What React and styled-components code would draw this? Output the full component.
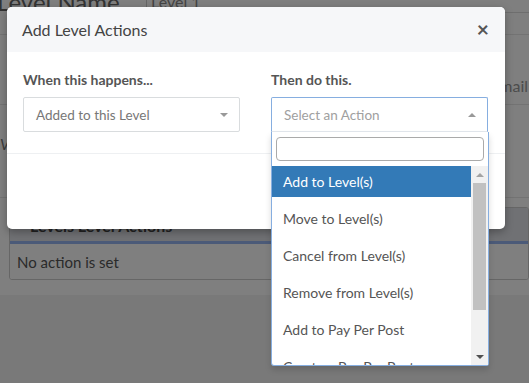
import React from 'react';
import styled, { createGlobalStyle } from 'styled-components';

const GlobalStyle = createGlobalStyle`
  html, body {
    margin: 0;
    padding: 0;
    width: 529px;
    height: 383px;
    overflow: hidden;
    background: #fff;
    font-family: Lato, "Noto Sans", sans-serif;
  }
`;

const Page = styled.div`
  position: relative;
  width: 529px;
  height: 383px;
  overflow: hidden;
  background: #fff;
  color: #666;
`;

/* page behind the modal */

const TopRow = styled.div`
  display: flex;
  align-items: flex-start;
  height: 35px;
  border-bottom: 1px solid #e6e6e6;
  box-sizing: border-box;
`;

const PageTitle = styled.h1`
  margin: -13px 0 0 -3px;
  width: 149px;
  font-size: 24px;
  line-height: 30px;
  font-weight: 400;
  color: #666;
`;

const NameInput = styled.div`
  flex: 1;
  height: 23px;
  margin-top: -10px;
  padding: 0 4px;
  box-sizing: border-box;
  border-left: 1px solid #ccc;
  border-bottom: 1px solid #ddd;
  font-size: 16px;
  line-height: 24px;
  color: #888;
`;

const TabRow = styled.div`
  display: flex;
  justify-content: flex-end;
  align-items: flex-end;
  height: 70px;
  padding-bottom: 9px;
  box-sizing: border-box;
  border-bottom: 1px solid #e6e6e6;
`;

const Tab = styled.span`
  font-size: 16px;
  color: #999;
  margin-right: 1px;
`;

const FormRow = styled.div`
  height: 93px;
  padding-top: 30px;
  box-sizing: border-box;
  border-bottom: 1px solid #e6e6e6;
  font-size: 15px;
  font-style: italic;
  color: #777;
`;

const Panel = styled.div`
  margin: 9px 0 0 9px;
  border: 1px solid #ccc;
  border-radius: 3px;
  overflow: hidden;
`;

const PanelHead = styled.div`
  height: 36px;
  padding: 0 20px;
  box-sizing: border-box;
  background: #e0e3e8;
  border-bottom: 3px solid #96b4f0;
  font-size: 16px;
  font-weight: 700;
  line-height: 36px;
  color: #444;
`;

const PanelRow = styled.div`
  height: 35px;
  padding: 0 7px;
  font-size: 15px;
  line-height: 36px;
  color: #555;
  background: #fff;
`;

const PageFoot = styled.div`
  margin-top: 15px;
  height: 100px;
  background: #f3f3f3;
`;

const Overlay = styled.div`
  position: absolute;
  inset: 0;
  background: rgba(0, 0, 0, 0.5);
`;

/* modal */

const Modal = styled.div`
  position: absolute;
  left: 7px;
  top: 7px;
  width: 498px;
  background: #fff;
  border-radius: 5px;
  box-shadow: 0 3px 9px rgba(0, 0, 0, 0.3);
`;

const ModalHeader = styled.div`
  display: flex;
  align-items: center;
  justify-content: space-between;
  height: 45px;
  padding: 0 16px 0 15px;
  background: #f6f7f9;
  border-radius: 5px 5px 0 0;
`;

const ModalTitle = styled.h4`
  margin: 0;
  font-size: 16px;
  font-weight: 400;
  color: #444;
`;

const Close = styled.span`
  font-size: 21px;
  font-weight: 700;
  line-height: 1;
  color: #555;
  margin-top: -2px;
`;

const ModalBody = styled.div`
  display: grid;
  grid-template-columns: 217px 217px;
  column-gap: 31px;
  padding: 18px 16px 21px;
  border-bottom: 1px solid #eef0f2;
`;

const Field = styled.div`
  position: relative;
`;

const Label = styled.label`
  display: block;
  margin-bottom: 7px;
  font-size: 14px;
  font-weight: 700;
  line-height: 20px;
  color: #555;
`;

const Select = styled.div`
  display: flex;
  align-items: center;
  justify-content: space-between;
  height: 35px;
  padding: 0 11px 0 12px;
  box-sizing: border-box;
  border: 1px solid ${(p) => (p.open ? '#86aee0' : '#d9dcde')};
  border-bottom-color: ${(p) => (p.open ? '#e3e8ee' : '#d9dcde')};
  border-radius: ${(p) => (p.open ? '2px 2px 0 0' : '2px')};
  font-size: 13.5px;
  color: ${(p) => (p.placeholder ? '#a0a0a0' : '#777')};
`;

const Caret = styled.span`
  width: 0;
  height: 0;
  border-left: 4px solid transparent;
  border-right: 4px solid transparent;
  ${(p) =>
    p.up
      ? 'border-bottom: 4px solid #999;'
      : 'border-top: 4px solid #999;'}
`;

const ModalFooter = styled.div`
  height: 75px;
`;

/* select dropdown */

const Dropdown = styled.div`
  position: absolute;
  top: 100%;
  left: 0;
  right: -1px;
  background: #fff;
  border: 1px solid #86aee0;
  border-top: none;
  border-radius: 0 0 3px 3px;
  box-shadow: 0 4px 6px rgba(0, 0, 0, 0.15);
  z-index: 2;
`;

const SearchWrap = styled.div`
  padding: 5px 4px;
`;

const Search = styled.div`
  height: 24px;
  border: 1px solid #aaa;
  border-radius: 4px;
  box-sizing: border-box;
`;

const List = styled.div`
  display: flex;
  height: 199px;
  overflow: hidden;
`;

const Options = styled.ul`
  flex: 1;
  margin: 0;
  padding: 0;
  list-style: none;
`;

const Option = styled.li`
  height: 31px;
  margin-bottom: 6px;
  padding: 0 11px;
  font-size: 14px;
  line-height: 31px;
  white-space: nowrap;
  color: ${(p) => (p.active ? '#fff' : '#555')};
  background: ${(p) => (p.active ? '#337ab7' : 'transparent')};
`;

const Scrollbar = styled.div`
  display: flex;
  flex-direction: column;
  width: 17px;
  background: #f1f1f1;
`;

const ScrollArrow = styled.div`
  display: flex;
  align-items: center;
  justify-content: center;
  height: 17px;
`;

const Thumb = styled.div`
  height: 127px;
  margin: 0 2px;
  background: #c1c1c1;
`;

const Spacer = styled.div`
  flex: 1;
`;

const Triangle = styled.span`
  width: 0;
  height: 0;
  border-left: 4px solid transparent;
  border-right: 4px solid transparent;
  ${(p) =>
    p.up
      ? 'border-bottom: 4px solid #a3a3a3;'
      : 'border-top: 4px solid #505050;'}
`;

const actions = [
  'Add to Level(s)',
  'Move to Level(s)',
  'Cancel from Level(s)',
  'Remove from Level(s)',
  'Add to Pay Per Post',
  'Create a Pay Per Post',
];

const App = () => {
  return (
    <Page>
      <GlobalStyle />

      <TopRow>
        <PageTitle>Level Name</PageTitle>
        <NameInput>Level 1</NameInput>
      </TopRow>
      <TabRow>
        <Tab>Email</Tab>
      </TabRow>
      <FormRow>Verification</FormRow>
      <Panel>
        <PanelHead>Levels Level Actions</PanelHead>
        <PanelRow>No action is set</PanelRow>
      </Panel>
      <PageFoot />

      <Overlay />

      <Modal>
        <ModalHeader>
          <ModalTitle>Add Level Actions</ModalTitle>
          <Close>×</Close>
        </ModalHeader>
        <ModalBody>
          <Field>
            <Label>When this happens...</Label>
            <Select>
              <span>Added to this Level</span>
              <Caret />
            </Select>
          </Field>
          <Field>
            <Label>Then do this.</Label>
            <Select open placeholder>
              <span>Select an Action</span>
              <Caret up />
            </Select>
            <Dropdown>
              <SearchWrap>
                <Search />
              </SearchWrap>
              <List>
                <Options>
                  {actions.map((a, i) => (
                    <Option key={a} active={i === 0}>
                      {a}
                    </Option>
                  ))}
                </Options>
                <Scrollbar>
                  <ScrollArrow>
                    <Triangle up />
                  </ScrollArrow>
                  <Thumb />
                  <Spacer />
                  <ScrollArrow>
                    <Triangle />
                  </ScrollArrow>
                </Scrollbar>
              </List>
            </Dropdown>
          </Field>
        </ModalBody>
        <ModalFooter />
      </Modal>
    </Page>
  );
};

export default App;
